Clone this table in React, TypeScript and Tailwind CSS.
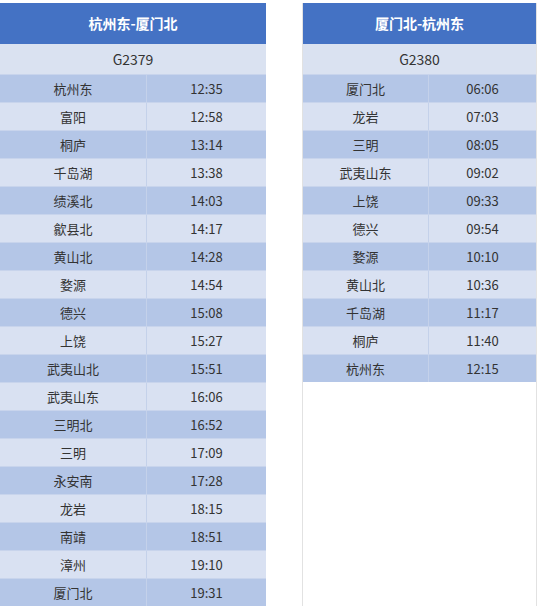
import React from 'react';

type Stop = [string, string];

const outbound: Stop[] = [
  ['杭州东', '12:35'],
  ['富阳', '12:58'],
  ['桐庐', '13:14'],
  ['千岛湖', '13:38'],
  ['绩溪北', '14:03'],
  ['歙县北', '14:17'],
  ['黄山北', '14:28'],
  ['婺源', '14:54'],
  ['德兴', '15:08'],
  ['上饶', '15:27'],
  ['武夷山北', '15:51'],
  ['武夷山东', '16:06'],
  ['三明北', '16:52'],
  ['三明', '17:09'],
  ['永安南', '17:28'],
  ['龙岩', '18:15'],
  ['南靖', '18:51'],
  ['漳州', '19:10'],
  ['厦门北', '19:31'],
];

const inbound: Stop[] = [
  ['厦门北', '06:06'],
  ['龙岩', '07:03'],
  ['三明', '08:05'],
  ['武夷山东', '09:02'],
  ['上饶', '09:33'],
  ['德兴', '09:54'],
  ['婺源', '10:10'],
  ['黄山北', '10:36'],
  ['千岛湖', '11:17'],
  ['桐庐', '11:40'],
  ['杭州东', '12:15'],
];

function Timetable({ title, train, stops, firstCol }: { title: string; train: string; stops: Stop[]; firstCol: string }) {
  return (
    <div>
      <div className="h-[41px] bg-[#4472c4] flex items-center justify-center text-white font-bold text-[14px]">
        {title}
      </div>
      <div className="h-[30px] bg-[#dae2f1] flex items-center justify-center text-[14px] text-[#333]">
        {train}
      </div>
      {stops.map(([station, time], idx) => (
        <div
          key={idx}
          className={`h-[28px] flex text-[13px] text-[#333] border-t border-[#c8d4ec] ${
            idx % 2 === 0 ? 'bg-[#b4c6e7]' : 'bg-[#d9e1f2]'
          }`}
        >
          <div className={`${firstCol} flex items-center justify-center border-r border-[#c4d1ea]`}>{station}</div>
          <div className="flex-1 flex items-center justify-center">{time}</div>
        </div>
      ))}
    </div>
  );
}

export default function App() {
  return (
    <div
      className="w-[543px] h-[606px] overflow-hidden bg-white pt-[3px] flex"
      style={{ fontFamily: '"Noto Sans CJK SC", "Noto Sans", sans-serif' }}
    >
      <div className="w-[266px] shrink-0">
        <Timetable title="杭州东-厦门北" train="G2379" stops={outbound} firstCol="w-[147px]" />
      </div>
      <div className="ml-[36px] w-[235px] shrink-0 border-x border-[#e2e2e2] h-[603px]">
        <Timetable title="厦门北-杭州东" train="G2380" stops={inbound} firstCol="w-[126px]" />
      </div>
    </div>
  );
}
